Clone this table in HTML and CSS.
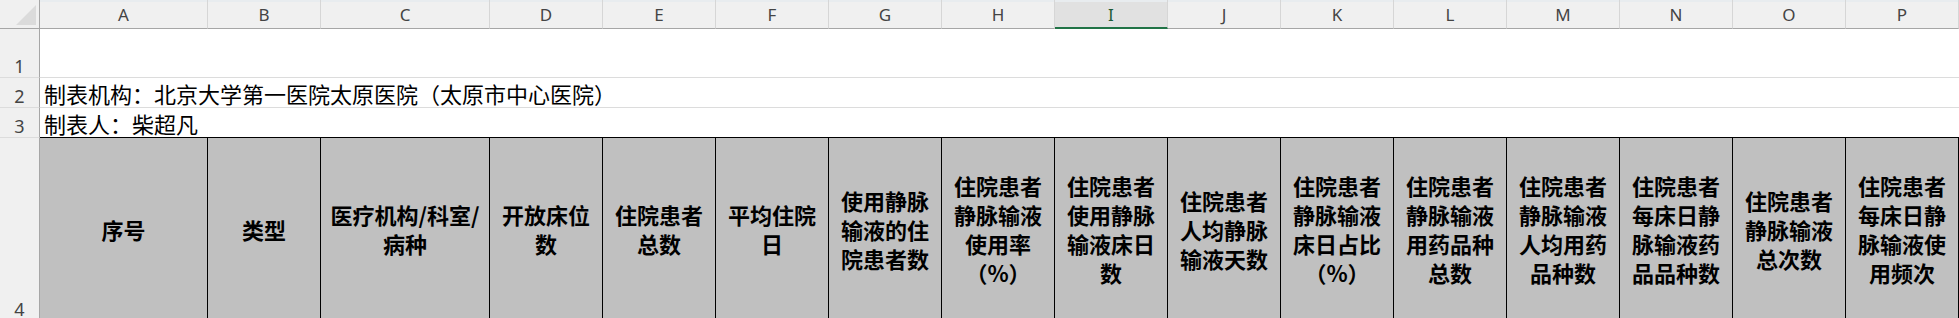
FILE: index.html
```html
<!DOCTYPE html>
<html lang="zh-CN">
<head>
<meta charset="utf-8">
<title>Sheet</title>
<link rel="stylesheet" href="styles.css">
</head>
<body>
<div class="sheet">
  <div class="corner"><svg class="tri" width="40" height="29" viewBox="0 0 40 29"><polygon points="36,5 36,25 16,25" fill="#dbdbdb"/></svg></div>
  <div class="colh">A</div>
  <div class="colh">B</div>
  <div class="colh">C</div>
  <div class="colh">D</div>
  <div class="colh">E</div>
  <div class="colh">F</div>
  <div class="colh">G</div>
  <div class="colh">H</div>
  <div class="colh sel">I</div>
  <div class="colh">J</div>
  <div class="colh">K</div>
  <div class="colh">L</div>
  <div class="colh">M</div>
  <div class="colh">N</div>
  <div class="colh">O</div>
  <div class="colh">P</div>

  <div class="rowh">1</div>
  <div class="line"></div>

  <div class="rowh">2</div>
  <div class="line"><span class="txt">制表机构：北京大学第一医院太原医院（太原市中心医院）</span></div>

  <div class="rowh">3</div>
  <div class="line last"><span class="txt">制表人：柴超凡</span></div>

  <div class="rowh tall">4</div>
  <div class="hd">序号</div>
  <div class="hd">类型</div>
  <div class="hd">医疗机构/科室/<br>病种</div>
  <div class="hd">开放床位<br>数</div>
  <div class="hd">住院患者<br>总数</div>
  <div class="hd">平均住院<br>日</div>
  <div class="hd">使用静脉<br>输液的住<br>院患者数</div>
  <div class="hd">住院患者<br>静脉输液<br>使用率<br>（%）</div>
  <div class="hd">住院患者<br>使用静脉<br>输液床日<br>数</div>
  <div class="hd">住院患者<br>人均静脉<br>输液天数</div>
  <div class="hd">住院患者<br>静脉输液<br>床日占比<br>（%）</div>
  <div class="hd">住院患者<br>静脉输液<br>用药品种<br>总数</div>
  <div class="hd">住院患者<br>静脉输液<br>人均用药<br>品种数</div>
  <div class="hd">住院患者<br>每床日静<br>脉输液药<br>品品种数</div>
  <div class="hd">住院患者<br>静脉输液<br>总次数</div>
  <div class="hd">住院患者<br>每床日静<br>脉输液使<br>用频次</div>
</div>
</body>
</html>
```

FILE: styles.css
```css
html, body {
  margin: 0;
  padding: 0;
  background: #ffffff;
  overflow: hidden;
}

.sheet {
  display: grid;
  grid-template-columns: 40px 168px 113px 169px repeat(13, 113px);
  grid-template-rows: 29px 49px 30px 30px 182px;
  width: 1959px;
}

.corner {
  background: #f0f0f0;
  border-right: 1px solid #a6a6a6;
  border-bottom: 1px solid #a6a6a6;
  box-sizing: border-box;
  position: relative;
}

.tri {
  position: absolute;
  left: 0;
  top: 0;
}

.colh {
  background: #f0f0f0;
  box-shadow: inset 0 2px 0 #e8ecef;
  border-right: 1px solid #d6d6d6;
  border-bottom: 1px solid #a6a6a6;
  box-sizing: border-box;
  display: flex;
  align-items: center;
  justify-content: center;
  font-family: "Noto Sans", "Liberation Sans", sans-serif;
  font-size: 17px;
  color: #444444;
  padding-top: 1px;
}

.colh.sel {
  background: #e1e1e1;
  border-bottom: 2px solid #217346;
  color: #1d5a36;
}

.rowh {
  background: #f0f0f0;
  border-right: 1px solid #a6a6a6;
  border-bottom: 1px solid #dcdcdc;
  box-sizing: border-box;
  display: flex;
  align-items: flex-end;
  justify-content: center;
  font-family: "Noto Sans", "Liberation Sans", sans-serif;
  font-size: 18px;
  line-height: 22px;
  color: #444444;
  padding-bottom: 0;
}

.rowh.tall {
  border-bottom: none;
  padding-bottom: 0;
}

.line {
  grid-column: 2 / -1;
  border-bottom: 1px solid #dcdcdc;
  box-sizing: border-box;
  display: flex;
  align-items: flex-end;
  padding-left: 4px;
  padding-bottom: 0;
  white-space: nowrap;
}

.line.last {
  border-bottom: 1px solid #000000;
}

.txt {
  font-family: "Noto Sans CJK SC", sans-serif;
  font-size: 22px;
  line-height: 27px;
  color: #000000;
  text-spacing-trim: space-all;
}

.hd {
  background: #c0c0c0;
  border-right: 1px solid #000000;
  box-sizing: border-box;
  display: flex;
  align-items: center;
  justify-content: center;
  text-align: center;
  white-space: nowrap;
  font-family: "Noto Sans CJK SC", sans-serif;
  font-weight: 700;
  font-size: 22px;
  line-height: 29px;
  color: #000000;
  text-spacing-trim: space-all;
}
```
